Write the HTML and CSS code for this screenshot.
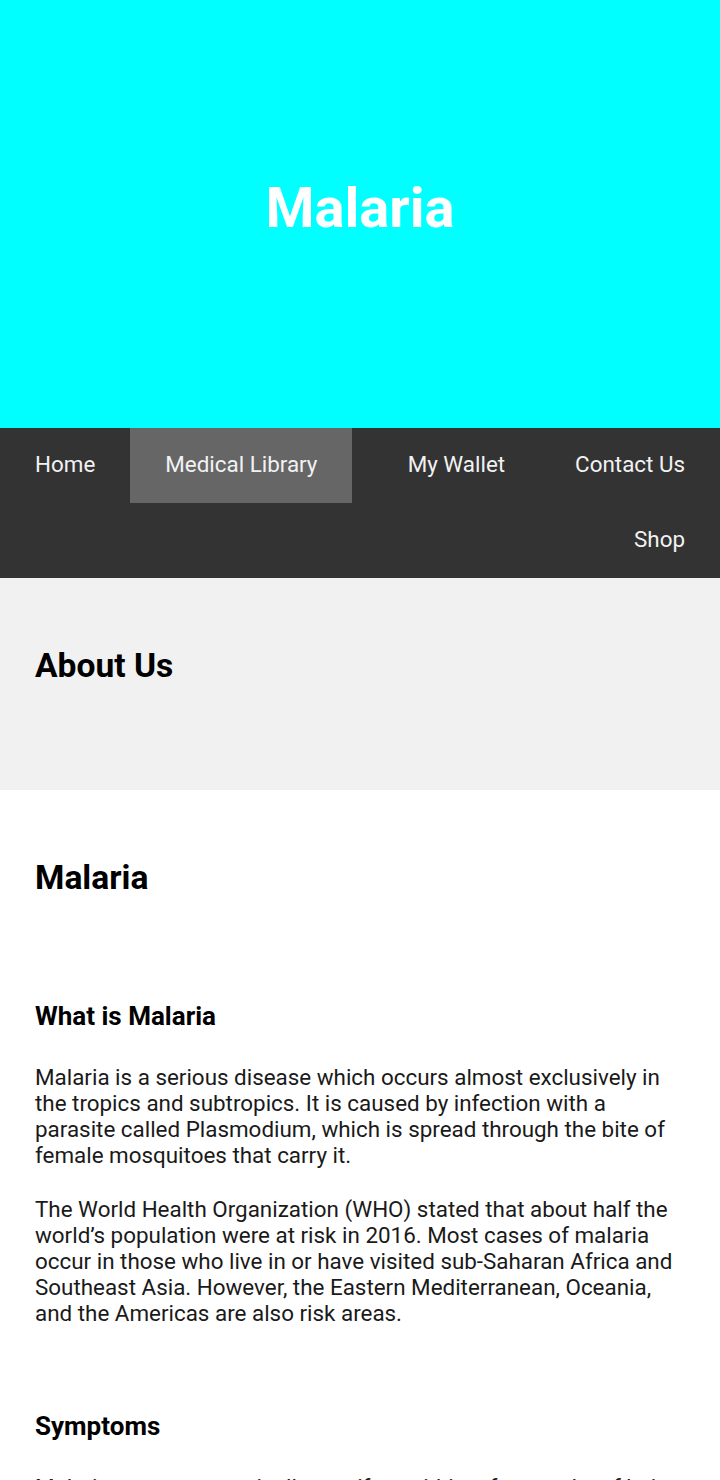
FILE: index.html
```html
<!DOCTYPE html>
<html lang="en">
<head>
<meta charset="utf-8">
<title>Malaria</title>
<link rel="stylesheet" href="styles.css">
</head>
<body>
<header class="hero">
  <h1 class="hero-title">Malaria</h1>
</header>
<nav class="topnav">
  <a class="nav-link" href="#">Home</a>
  <a class="nav-link active" href="#">Medical Library</a>
  <a class="nav-link push" href="#">My Wallet</a>
  <a class="nav-link" href="#">Contact Us</a>
  <a class="nav-link push" href="#">Shop</a>
</nav>
<section class="about">
  <h2 class="section-title">About Us</h2>
</section>
<main class="content">
  <h2 class="section-title">Malaria</h2>
  <h3 class="sub-title">What is Malaria</h3>
  <p class="text">Malaria is a serious disease which occurs almost exclusively in the tropics and subtropics. It is caused by infection with a parasite called Plasmodium, which is spread through the bite of female mosquitoes that carry it.</p>
  <p class="text">The World Health Organization (WHO) stated that about half the world’s population were at risk in 2016. Most cases of malaria occur in those who live in or have visited sub-Saharan Africa and Southeast Asia. However, the Eastern Mediterranean, Oceania, and the Americas are also risk areas.</p>
  <h3 class="sub-title spaced">Symptoms</h3>
  <p class="text">Malaria symptoms typically manifest within a few weeks of being bitten by an infected mosquito.</p>
</main>
</body>
</html>
```
FILE: styles.css
```css
* { box-sizing: border-box; }
html, body { margin: 0; padding: 0; }
body {
  font-family: Roboto, "Liberation Sans", sans-serif;
  background: #ffffff;
  color: #000;
}
.hero {
  height: 428px;
  background: #00ffff;
  display: flex;
  align-items: center;
  justify-content: center;
}
.hero-title {
  margin: 0 0 12px 0;
  color: #ffffff;
  font-size: 56px;
  font-weight: 700;
}
.topnav {
  display: flex;
  flex-wrap: wrap;
  background: #333333;
}
.nav-link {
  display: block;
  color: #f2f2f2;
  text-decoration: none;
  font-size: 22.4px;
  line-height: 27px;
  padding: 23px 35px 25px;
}
.nav-link.active { background: #666666; }
.nav-link.push { margin-left: auto; }
.about {
  background: #f1f1f1;
  height: 212px;
  padding: 60px 35px 0;
}
.section-title {
  margin: 0;
  font-size: 33.6px;
  font-weight: 700;
  line-height: 56px;
}
.content {
  padding: 60px 35px 0;
}
.sub-title {
  margin: 95px 0 0;
  font-size: 26px;
  font-weight: 700;
  line-height: 30px;
}
.sub-title.spaced { margin-top: 85px; }
.text {
  margin: 33px 0 0;
  font-size: 22.4px;
  line-height: 26px;
  color: #1a1a1a;
}
.text + .text { margin-top: 28px; }
```
